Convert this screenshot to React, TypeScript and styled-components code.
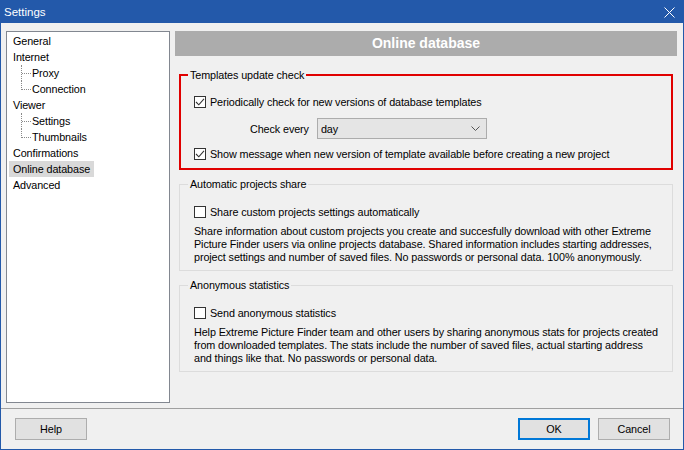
import React from 'react';
import styled, { createGlobalStyle } from 'styled-components';

const GlobalStyle = createGlobalStyle`
  html, body {
    margin: 0;
    padding: 0;
    background: #f0f0f0;
  }
  body {
    font-family: "Liberation Sans", Arial, sans-serif;
    font-size: 10.8px;
    letter-spacing: -0.1px;
    color: #000;
  }
  * { box-sizing: border-box; }
`;

const Window = styled.div`
  width: 684px;
  height: 450px;
  display: flex;
  flex-direction: column;
  background: #f0f0f0;
  border: 1px solid #2359aa;
`;

const TitleBar = styled.div`
  height: 22px;
  flex: none;
  display: flex;
  align-items: center;
  justify-content: space-between;
  padding: 0 8px 0 3px;
  background: #2359aa;
  color: #fff;
  font-size: 11.5px;
  letter-spacing: 0;
`;

const Body = styled.div`
  flex: 1;
  display: flex;
  gap: 5px;
  padding: 8px 6px 5px 5px;
  min-height: 0;
`;

const Tree = styled.div`
  width: 164px;
  flex: none;
  background: #fff;
  border: 1px solid #828790;
  padding: 1px 0;
`;

const TreeRow = styled.div`
  display: flex;
  height: 16px;
`;

const Connector = styled.span<{ $last?: boolean }>`
  position: relative;
  flex: none;
  width: 10px;
  margin-left: 14px;

  &::before {
    content: '';
    position: absolute;
    left: 0;
    top: 0;
    height: ${p => (p.$last ? '9px' : '16px')};
    border-left: 1px dotted #8a8a8a;
  }
  &::after {
    content: '';
    position: absolute;
    left: 1px;
    top: 8px;
    width: 9px;
    border-top: 1px dotted #8a8a8a;
  }
`;

const ItemLabel = styled.span<{ $selected?: boolean; $child?: boolean }>`
  display: flex;
  align-items: center;
  margin-left: ${p => (p.$child ? '0' : '2px')};
  padding: ${p => (p.$child ? '0 4px 0 1px' : '0 4px')};
  background: ${p => (p.$selected ? '#d9d9d9' : 'transparent')};
  white-space: nowrap;
`;

const Panel = styled.div`
  flex: 1;
  display: flex;
  flex-direction: column;
  min-width: 0;
`;

const Header = styled.div`
  height: 25px;
  flex: none;
  background: #acacac;
  color: #fff;
  font-weight: bold;
  font-size: 14px;
  letter-spacing: 0;
  text-align: center;
  line-height: 25px;
`;

const GroupBox = styled.div<{ $highlight?: boolean; $top: number }>`
  position: relative;
  margin: ${p => p.$top}px 4px 0;
  border: ${p => (p.$highlight ? '2px solid #e00000' : '1px solid #dcdcdc')};
  padding: ${p => (p.$highlight ? '18px 8px 6px 13px' : '19px 8px 6px 14px')};
`;

const Caption = styled.span<{ $highlight?: boolean }>`
  position: absolute;
  top: -8px;
  left: ${p => (p.$highlight ? '7px' : '8px')};
  padding: 0 2px;
  line-height: 14px;
  background: #f0f0f0;
  white-space: nowrap;
`;

const CheckRow = styled.div<{ $gap?: number }>`
  display: flex;
  align-items: center;
  gap: 4px;
  height: 16px;
  margin-top: ${p => p.$gap ?? 0}px;
  white-space: nowrap;
`;

const Box = styled.span`
  width: 12px;
  height: 12px;
  flex: none;
  display: flex;
  align-items: center;
  justify-content: center;
  background: #fff;
  border: 1px solid #333;
`;

const SelectRow = styled.div`
  display: flex;
  align-items: center;
  gap: 8px;
  height: 21px;
  margin-top: 8px;
  padding-left: 56px;
`;

const Combo = styled.div`
  width: 170px;
  height: 21px;
  display: flex;
  align-items: center;
  justify-content: space-between;
  padding: 0 6px 0 3px;
  background: #e5e5e5;
  border: 1px solid #acacac;
`;

const Note = styled.p`
  margin: 5px 0 0;
  line-height: 13px;
  white-space: nowrap;
`;

const Footer = styled.div`
  height: 41px;
  flex: none;
  display: flex;
  justify-content: space-between;
  align-items: flex-start;
  padding: 9px 13px 0 14px;
  border-top: 1px solid #a0a0a0;
`;

const ButtonGroup = styled.div`
  display: flex;
  gap: 8px;
`;

const Button = styled.button<{ $default?: boolean }>`
  width: 72px;
  height: 22px;
  padding: 0;
  font: inherit;
  letter-spacing: inherit;
  color: #000;
  background: #e1e1e1;
  border: ${p => (p.$default ? '2px solid #0078d7' : '1px solid #adadad')};
`;

const Check = ({ checked }: { checked?: boolean }) => (
  <Box>
    {checked && (
      <svg width="10" height="10" viewBox="0 0 10 10">
        <polyline points="1,5 3.8,7.8 9,1.8" fill="none" stroke="#333" strokeWidth="1.1" />
      </svg>
    )}
  </Box>
);

type Node = { label: string; child?: boolean; last?: boolean; selected?: boolean };

const nodes: Node[] = [
  { label: 'General' },
  { label: 'Internet' },
  { label: 'Proxy', child: true },
  { label: 'Connection', child: true, last: true },
  { label: 'Viewer' },
  { label: 'Settings', child: true },
  { label: 'Thumbnails', child: true, last: true },
  { label: 'Confirmations' },
  { label: 'Online database', selected: true },
  { label: 'Advanced' },
];

const App: React.FC = () => {
  return (
    <>
      <GlobalStyle />
      <Window>
        <TitleBar>
          <span>Settings</span>
          <svg width="11" height="11" viewBox="0 0 11 11">
            <path d="M0.5 0.5 L10.5 10.5 M10.5 0.5 L0.5 10.5" stroke="#fff" strokeWidth="1" />
          </svg>
        </TitleBar>

        <Body>
          <Tree>
            {nodes.map(n => (
              <TreeRow key={n.label}>
                {n.child && <Connector $last={n.last} />}
                <ItemLabel $child={n.child} $selected={n.selected}>
                  {n.label}
                </ItemLabel>
              </TreeRow>
            ))}
          </Tree>

          <Panel>
            <Header>Online database</Header>

            <GroupBox $highlight $top={18}>
              <Caption $highlight>Templates update check</Caption>
              <CheckRow>
                <Check checked />
                Periodically check for new versions of database templates
              </CheckRow>
              <SelectRow>
                <span>Check every</span>
                <Combo>
                  <span>day</span>
                  <svg width="9" height="5" viewBox="0 0 9 5">
                    <polyline points="0.5,0.5 4.5,4.5 8.5,0.5" fill="none" stroke="#555" strokeWidth="1" />
                  </svg>
                </Combo>
              </SelectRow>
              <CheckRow $gap={7}>
                <Check checked />
                Show message when new version of template available before creating a new project
              </CheckRow>
            </GroupBox>

            <GroupBox $top={14}>
              <Caption>Automatic projects share</Caption>
              <CheckRow>
                <Check />
                Share custom projects settings automatically
              </CheckRow>
              <Note>
                Share information about custom projects you create and succesfully download with other Extreme
                <br />
                Picture Finder users via online projects database. Shared information includes starting addresses,
                <br />
                project settings and number of saved files. No passwords or personal data. 100% anonymously.
              </Note>
            </GroupBox>

            <GroupBox $top={14}>
              <Caption>Anonymous statistics</Caption>
              <CheckRow>
                <Check />
                Send anonymous statistics
              </CheckRow>
              <Note>
                Help Extreme Picture Finder team and other users by sharing anonymous stats for projects created
                <br />
                from downloaded templates. The stats include the number of saved files, actual starting address
                <br />
                and things like that. No passwords or personal data.
              </Note>
            </GroupBox>
          </Panel>
        </Body>

        <Footer>
          <Button>Help</Button>
          <ButtonGroup>
            <Button $default>OK</Button>
            <Button>Cancel</Button>
          </ButtonGroup>
        </Footer>
      </Window>
    </>
  );
};

export default App;
